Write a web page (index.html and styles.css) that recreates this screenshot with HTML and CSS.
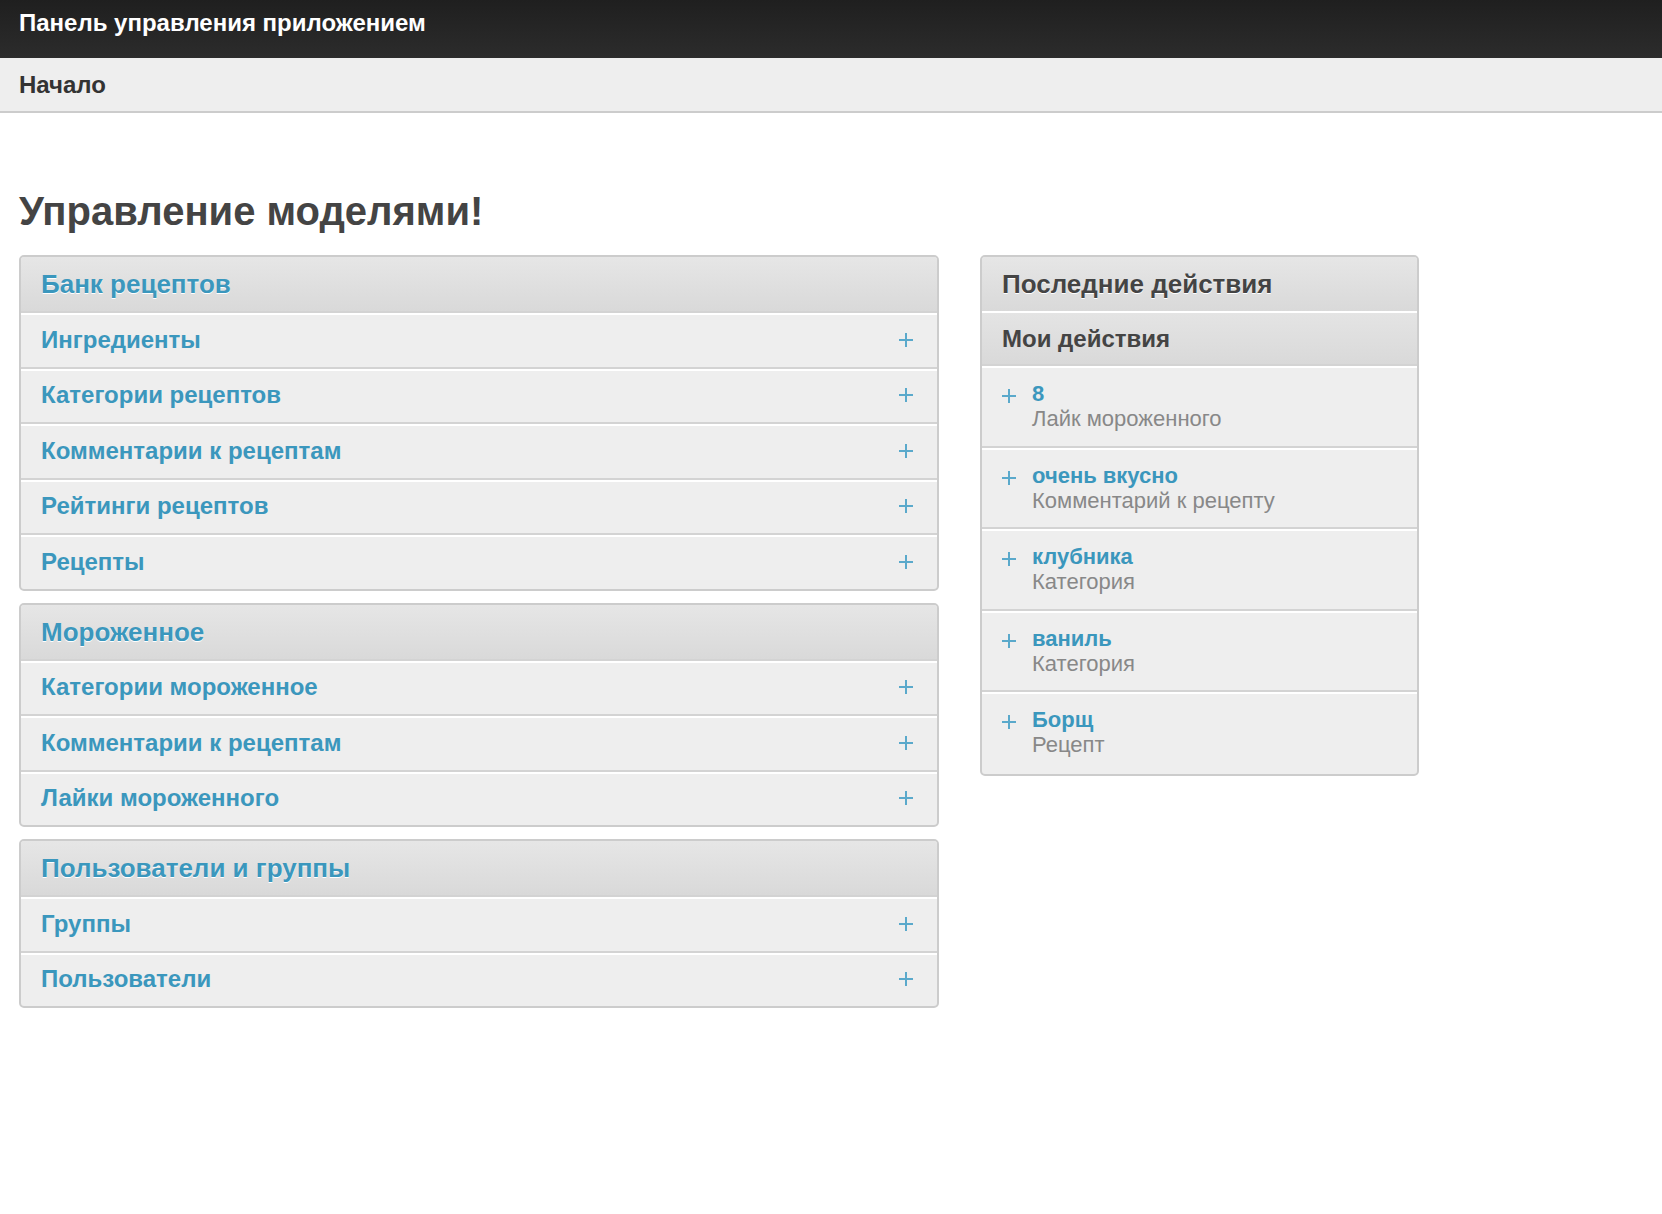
FILE: index.html
```html
<!DOCTYPE html>
<html lang="ru">
<head>
<meta charset="utf-8">
<title>Панель управления приложением</title>
<link rel="stylesheet" href="styles.css">
</head>
<body>
<header class="topbar">Панель управления приложением</header>
<nav class="breadcrumbs">Начало</nav>
<main class="content">
  <h1 class="page-title">Управление моделями!</h1>
  <div class="columns">
    <div class="apps">
      <section class="module">
        <h2 class="module-caption link">Банк рецептов</h2>
        <div class="row"><a class="row-link">Ингредиенты</a><span class="plus"><svg viewBox="0 0 14 14"><path d="M7 0v14M0 7h14"/></svg></span></div>
        <div class="row"><a class="row-link">Категории рецептов</a><span class="plus"><svg viewBox="0 0 14 14"><path d="M7 0v14M0 7h14"/></svg></span></div>
        <div class="row"><a class="row-link">Комментарии к рецептам</a><span class="plus"><svg viewBox="0 0 14 14"><path d="M7 0v14M0 7h14"/></svg></span></div>
        <div class="row"><a class="row-link">Рейтинги рецептов</a><span class="plus"><svg viewBox="0 0 14 14"><path d="M7 0v14M0 7h14"/></svg></span></div>
        <div class="row"><a class="row-link">Рецепты</a><span class="plus"><svg viewBox="0 0 14 14"><path d="M7 0v14M0 7h14"/></svg></span></div>
      </section>
      <section class="module">
        <h2 class="module-caption link">Мороженное</h2>
        <div class="row"><a class="row-link">Категории мороженное</a><span class="plus"><svg viewBox="0 0 14 14"><path d="M7 0v14M0 7h14"/></svg></span></div>
        <div class="row"><a class="row-link">Комментарии к рецептам</a><span class="plus"><svg viewBox="0 0 14 14"><path d="M7 0v14M0 7h14"/></svg></span></div>
        <div class="row"><a class="row-link">Лайки мороженного</a><span class="plus"><svg viewBox="0 0 14 14"><path d="M7 0v14M0 7h14"/></svg></span></div>
      </section>
      <section class="module">
        <h2 class="module-caption link">Пользователи и группы</h2>
        <div class="row"><a class="row-link">Группы</a><span class="plus"><svg viewBox="0 0 14 14"><path d="M7 0v14M0 7h14"/></svg></span></div>
        <div class="row"><a class="row-link">Пользователи</a><span class="plus"><svg viewBox="0 0 14 14"><path d="M7 0v14M0 7h14"/></svg></span></div>
      </section>
    </div>
    <aside class="recent">
      <section class="module">
        <h2 class="module-caption dark">Последние действия</h2>
        <h3 class="module-sub">Мои действия</h3>
        <div class="action"><span class="plus small"><svg viewBox="0 0 14 14"><path d="M7 0v14M0 7h14"/></svg></span><div class="action-text"><a class="action-title">8</a><span class="action-type">Лайк мороженного</span></div></div>
        <div class="action"><span class="plus small"><svg viewBox="0 0 14 14"><path d="M7 0v14M0 7h14"/></svg></span><div class="action-text"><a class="action-title">очень вкусно</a><span class="action-type">Комментарий к рецепту</span></div></div>
        <div class="action"><span class="plus small"><svg viewBox="0 0 14 14"><path d="M7 0v14M0 7h14"/></svg></span><div class="action-text"><a class="action-title">клубника</a><span class="action-type">Категория</span></div></div>
        <div class="action"><span class="plus small"><svg viewBox="0 0 14 14"><path d="M7 0v14M0 7h14"/></svg></span><div class="action-text"><a class="action-title">ваниль</a><span class="action-type">Категория</span></div></div>
        <div class="action"><span class="plus small"><svg viewBox="0 0 14 14"><path d="M7 0v14M0 7h14"/></svg></span><div class="action-text"><a class="action-title">Борщ</a><span class="action-type">Рецепт</span></div></div>
      </section>
    </aside>
  </div>
</main>
</body>
</html>
```
FILE: styles.css
```css
* { box-sizing: border-box; }
body {
  margin: 0;
  font-family: "Liberation Sans", Arial, sans-serif;
  background: #fff;
  color: #333;
}
.topbar {
  height: 58px;
  background: linear-gradient(#1f1f1f, #2c2c2c);
  color: #fff;
  font-weight: bold;
  font-size: 24px;
  line-height: 28px;
  padding: 9px 0 0 19px;
}
.breadcrumbs {
  height: 55px;
  background: #eeeeee;
  border-bottom: 2px solid #cccccc;
  font-weight: bold;
  font-size: 24px;
  line-height: 28px;
  color: #333;
  padding: 13px 0 0 19px;
}
.content {
  padding: 0 19px;
}
.page-title {
  margin: 75px 0 21px;
  font-size: 40px;
  line-height: 46px;
  color: #444;
  font-weight: bold;
}
.columns {
  display: flex;
  align-items: flex-start;
  gap: 41px;
}
.apps {
  width: 920px;
  display: flex;
  flex-direction: column;
  gap: 12px;
}
.recent {
  width: 439px;
}
.module {
  border: 2px solid #cccccc;
  border-radius: 5px;
  background: #eeeeee;
  overflow: hidden;
}
.module-caption {
  margin: 0;
  height: 54px;
  padding: 12px 0 0 20px;
  font-size: 26px;
  line-height: 30px;
  font-weight: bold;
  background: linear-gradient(#e6e6e6, #d9d9d9);
  text-shadow: 0 1px 0 #fff;
}
.module-caption.link { color: #3b97bd; }
.module-caption.dark { color: #444; }
.module-sub {
  margin: 0;
  height: 55px;
  padding: 12px 0 0 20px;
  font-size: 24px;
  line-height: 28px;
  font-weight: bold;
  color: #444;
  border-top: 2px solid #ffffff;
  border-bottom: 2px solid #d3d3d3;
  background: linear-gradient(#e4e4e4, #d9d9d9);
}
.row {
  height: 55.5px;
  display: flex;
  align-items: center;
  justify-content: space-between;
  padding: 0 24px 0 20px;
  border-top: 2px solid #d3d3d3;
  box-shadow: inset 0 2px 0 #ffffff;
}
.row-link {
  color: #3b97bd;
  font-weight: bold;
  font-size: 24px;
  text-decoration: none;
}
.plus {
  display: inline-flex;
  width: 14px;
  height: 14px;
}
.plus svg {
  width: 14px;
  height: 14px;
  stroke: #5aa9cb;
  stroke-width: 2;
  fill: none;
}
.action {
  height: 81.5px;
  display: flex;
  align-items: flex-start;
  gap: 16px;
  padding: 13px 0 0 20px;
  border-top: 2px solid #ffffff;
  border-bottom: 2px solid #d3d3d3;
}
.action:last-child { border-bottom: none; }
.action .plus { margin-top: 8px; }
.action-text {
  display: flex;
  flex-direction: column;
}
.action-title {
  color: #3b97bd;
  font-weight: bold;
  font-size: 22px;
  line-height: 25px;
}
.action-type {
  color: #888;
  font-size: 22px;
  line-height: 25px;
}
```
